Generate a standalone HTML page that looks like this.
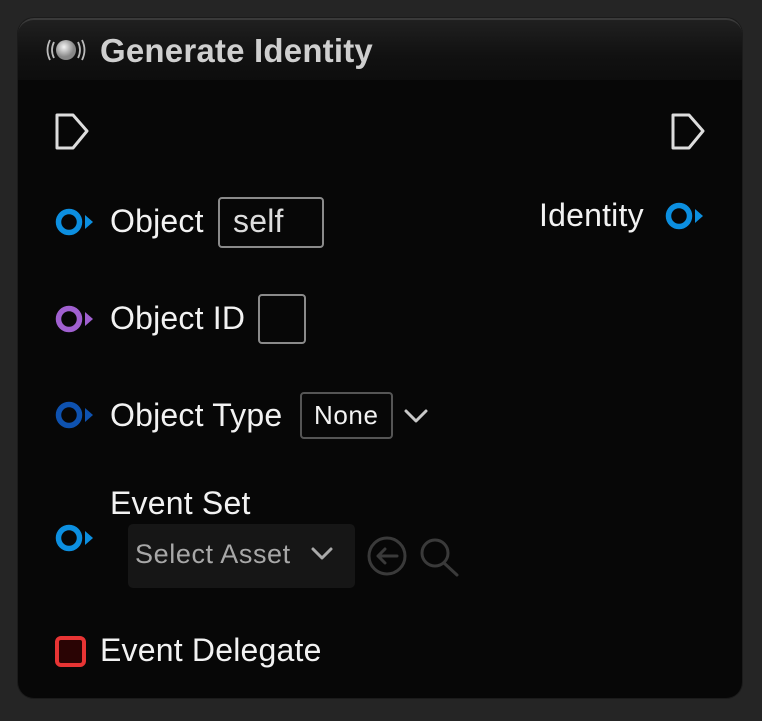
<!DOCTYPE html>
<html><head><meta charset="utf-8"><style>
html,body{margin:0;padding:0;width:762px;height:721px;background:#252525;overflow:hidden;font-family:"Liberation Sans",sans-serif}
.node{position:absolute;left:18px;top:18px;width:724px;height:680px;background:#070707;border-radius:16px;box-shadow:0 0 0 1px #1b1b1b}
.hdr{position:absolute;left:18px;top:18px;width:724px;height:62px;border-radius:16px 16px 0 0;background:linear-gradient(#202020,#111 60%,#0d0d0d);border-top:2px solid #3a3a3a;box-sizing:border-box}
.t{position:absolute;color:#f2f2f2;font-size:32px;letter-spacing:0.2px;white-space:nowrap;line-height:1}
.box{position:absolute;border:2px solid #8a8a8a;border-radius:4px;box-sizing:border-box}
svg{position:absolute;left:0;top:0}
</style></head><body>
<div class="node"></div>
<div class="hdr"></div>
<div class="t" style="left:100px;top:34px;font-weight:bold;font-size:33px;letter-spacing:0.2px;color:#cfcfcf">Generate Identity</div>
<div class="t" style="left:110px;top:205px">Object</div>
<div class="box" style="left:218px;top:197px;width:106px;height:51px"></div>
<div class="t" style="left:233px;top:205px;color:#ddd">self</div>
<div class="t" style="left:539px;top:199px">Identity</div>
<div class="t" style="left:110px;top:302px">Object ID</div>
<div class="box" style="left:258px;top:294px;width:48px;height:50px"></div>
<div class="t" style="left:110px;top:399px">Object Type</div>
<div class="box" style="left:300px;top:392px;width:93px;height:47px;border-color:#555"></div>
<div class="t" style="left:314px;top:402px;font-size:26px;letter-spacing:0.6px">None</div>
<div class="t" style="left:110px;top:487px">Event Set</div>
<div style="position:absolute;left:128px;top:524px;width:227px;height:64px;background:#161616;border-radius:5px"></div>
<div class="t" style="left:135px;top:541px;font-size:27px;letter-spacing:0.6px;color:#a8a8a8">Select Asset</div>
<div class="t" style="left:100px;top:634px">Event Delegate</div>
<svg width="762" height="721">
<defs><radialGradient id="g" cx="40%" cy="35%"><stop offset="0" stop-color="#f4f4f4"/><stop offset="1" stop-color="#888"/></radialGradient></defs>
<circle cx="66" cy="50" r="10" fill="url(#g)"/>
<g fill="none" stroke="#bbb" stroke-width="1.8"><path d="M54,42 Q50,50 54,58"/><path d="M50,40 Q45,50 50,60"/><path d="M78,42 Q82,50 78,58"/><path d="M82,40 Q87,50 82,60"/></g>
<g fill="none" stroke="#ddd" stroke-width="3" stroke-linejoin="round">
<path d="M57,115 L73,115 L87,131 L73,148 L57,148 Z"/>
<path d="M673,115 L689,115 L703,131 L689,148 L673,148 Z"/>
</g>
<g fill="none" stroke-width="5.5">
<circle cx="69" cy="222" r="10.5" stroke="#0c8fe0"/>
<circle cx="679" cy="216" r="10.5" stroke="#0c8fe0"/>
<circle cx="69" cy="319" r="10.5" stroke="#a060d0"/>
<circle cx="69" cy="415" r="10.5" stroke="#0e52b0"/>
<circle cx="69" cy="538" r="10.5" stroke="#0c8fe0"/>
</g>
<path d="M85,215 L93,222 L85,229Z" fill="#0c8fe0"/>
<path d="M695,209 L703,216 L695,223Z" fill="#0c8fe0"/>
<path d="M85,312 L93,319 L85,326Z" fill="#a060d0"/>
<path d="M85,408 L93,415 L85,422Z" fill="#0e52b0"/>
<path d="M85,531 L93,538 L85,545Z" fill="#0c8fe0"/>
<rect x="57" y="638" width="27" height="27" rx="4" fill="#2a0404" stroke="#e83434" stroke-width="4"/>
<g fill="none" stroke="#c8c8c8" stroke-width="3" stroke-linecap="round" stroke-linejoin="round">
<path d="M406,411 L416,421 L426,411"/>
</g>
<g fill="none" stroke="#aaa" stroke-width="3" stroke-linecap="round" stroke-linejoin="round">
<path d="M313,549 L322,558 L331,549"/>
</g>
<g fill="none" stroke="#3a3a3a" stroke-width="3" stroke-linecap="round" stroke-linejoin="round">
<circle cx="387" cy="556" r="18"/>
<path d="M397,556 L378,556 M385,549 L378,556 L385,563"/>
<circle cx="435" cy="553" r="13"/>
<path d="M444,563 L457,575"/>
</g>
</svg>
</body></html>
